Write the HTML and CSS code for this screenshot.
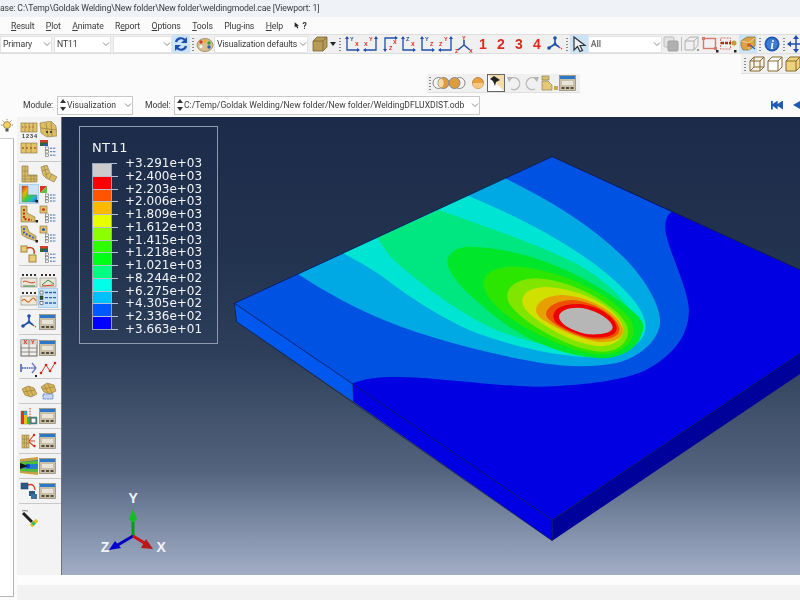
FILE: index.html
```html
<!DOCTYPE html>
<html lang="en">
<head>
<meta charset="utf-8">
<title>Abaqus/CAE Visualization</title>
<link rel="stylesheet" href="styles.css">
</head>
<body>
<svg class="defs" width="0" height="0" aria-hidden="true">
  <defs>
    <symbol id="chev" viewBox="0 0 8 8"><path d="M1 2.5 4 5.5 7 2.5" fill="none" stroke="#8a8a8a" stroke-width="1"/></symbol>
    <symbol id="spin" viewBox="0 0 8 16"><path d="M4 2 7 6H1Z M4 14 1 10H7Z" fill="#333"/></symbol>
    <symbol id="sync" viewBox="0 0 18 18"><path d="M4 7C5 3 10 2 13 5" fill="none" stroke="#1f4fb0" stroke-width="2.2"/><path d="M15 2V8H9Z" fill="#1f4fb0"/><path d="M14 11C13 15 8 16 5 13" fill="none" stroke="#1f4fb0" stroke-width="2.2"/><path d="M3 16V10H9Z" fill="#1f4fb0"/></symbol>
    <symbol id="palette" viewBox="0 0 18 18"><ellipse cx="9" cy="10" rx="8" ry="6.5" fill="#d8bf8e" stroke="#8a7550" stroke-width=".7"/><circle cx="5" cy="7" r="1.7" fill="#d63a2a"/><circle cx="9" cy="6" r="1.7" fill="#e8b020"/><circle cx="13" cy="8" r="1.7" fill="#3a9a3a"/><circle cx="13" cy="12" r="1.7" fill="#2a5ac0"/><circle cx="5" cy="11.5" r="1.5" fill="#fff"/></symbol>
    <symbol id="cube-solid" viewBox="0 0 18 18"><path d="M2 6 6 2H16V12L12 16H2Z" fill="#b89a58" stroke="#7a6436" stroke-width=".8"/><path d="M2 6H12V16M12 6 16 2" fill="none" stroke="#7a6436" stroke-width=".8"/></symbol>
    <symbol id="ax1" viewBox="0 0 18 18"><path d="M4 3V15H15" fill="none" stroke="#1f4fa8" stroke-width="1.3"/><path d="M4 1 6 4H2ZM17 15 14 17V13Z" fill="#1f4fa8"/><text x="7" y="6" class="axt blue">Y</text><text x="12" y="11" class="axt red">X</text></symbol>
    <symbol id="ax2" viewBox="0 0 18 18"><path d="M14 3V15H2" fill="none" stroke="#1f4fa8" stroke-width="1.3"/><path d="M14 1 16 4H12ZM1 15 4 13V17Z" fill="#1f4fa8"/><text x="7" y="6" class="axt red">Y</text><text x="2" y="11" class="axt red">X</text></symbol>
    <symbol id="ax3" viewBox="0 0 18 18"><path d="M15 3H4V15" fill="none" stroke="#1f4fa8" stroke-width="1.3"/><path d="M17 3 14 5V1ZM4 17 2 14H6Z" fill="#1f4fa8"/><text x="12" y="9" class="axt red">X</text><text x="8" y="15" class="axt red">Z</text></symbol>
    <symbol id="ax4" viewBox="0 0 18 18"><path d="M4 3V15H15" fill="none" stroke="#1f4fa8" stroke-width="1.3"/><path d="M4 1 6 4H2ZM17 15 14 17V13Z" fill="#1f4fa8"/><text x="7" y="6" class="axt blue">Z</text><text x="12" y="11" class="axt red">X</text></symbol>
    <symbol id="ax5" viewBox="0 0 18 18"><path d="M4 3V15H15" fill="none" stroke="#1f4fa8" stroke-width="1.3"/><path d="M4 1 6 4H2ZM17 15 14 17V13Z" fill="#1f4fa8"/><text x="7" y="6" class="axt blue">Y</text><text x="12" y="11" class="axt red">Z</text></symbol>
    <symbol id="ax6" viewBox="0 0 18 18"><path d="M14 3V15H2" fill="none" stroke="#1f4fa8" stroke-width="1.3"/><path d="M14 1 16 4H12ZM1 15 4 13V17Z" fill="#1f4fa8"/><text x="7" y="6" class="axt red">Y</text><text x="2" y="11" class="axt red">Z</text></symbol>
    <symbol id="tri" viewBox="0 0 18 18"><path d="M9 5V10L3 15M9 10 15 15" fill="none" stroke="#1f4fa8" stroke-width="1.5"/><text x="7" y="4.500" class="axt red">Y</text><text x="0" y="17.500" class="axt red">Z</text><text x="14" y="17.500" class="axt red">X</text></symbol>
    <symbol id="triad" viewBox="0 0 18 18"><path d="M9 3V9L3 13M9 9 13 12" fill="none" stroke="#1f4fa8" stroke-width="1.6"/><circle cx="9" cy="3" r="1.8" fill="#1f4fa8"/><circle cx="9" cy="9" r="1.5" fill="#1f4fa8"/><circle cx="3" cy="13" r="1.8" fill="#1f4fa8"/><path d="M13 12 16 14" stroke="#d63a2a" stroke-dasharray="1.5 1" stroke-width="1.5"/></symbol>
    <symbol id="pointer" viewBox="0 0 18 18"><path d="M4 2V15L7.500 11.500 10 16.500 12.500 15.500 10 10.500H15Z" fill="#eef1f5" stroke="#333" stroke-width="1.2"/></symbol>
    <symbol id="layers" viewBox="0 0 18 18"><rect x="2" y="2" width="10" height="10" rx="1" fill="#e3e3e3" stroke="#bbb"/><rect x="6" y="6" width="10" height="10" rx="1" fill="#b0b0b0" stroke="#a0a0a0"/></symbol>
    <symbol id="wire" viewBox="0 0 18 18"><path d="M2 6 7 2H15V10L11 15H2ZM2 6H11V15M11 6 15 2" fill="none" stroke="#a9a9a9" stroke-width=".9"/><circle cx="15" cy="15" r="1" fill="#777"/></symbol>
    <symbol id="redbox" viewBox="0 0 18 18"><rect x="2.500" y="3.500" width="12" height="10" fill="none" stroke="#d9786a" stroke-width="1.4"/><rect x="1" y="2" width="3" height="3" fill="#d9786a"/><rect x="13" y="12" width="3" height="3" fill="#d9786a"/><rect x="15" y="15" width="2.500" height="2.500" fill="#222"/></symbol>
    <symbol id="reddots" viewBox="0 0 18 18"><rect x="1.500" y="3" width="10" height="11" fill="none" stroke="#d9786a" stroke-dasharray="2 1"/><path d="M2 8H12" stroke="#b02818" stroke-width="2.500" stroke-dasharray="3 1"/><circle cx="15" cy="8" r="2.500" fill="#c09a40"/><rect x="15" y="15" width="2.500" height="2.500" fill="#222"/></symbol>
    <symbol id="boxsel" viewBox="0 0 18 18"><path d="M2 6 8 2H16L16 11 10 15H4L2 11Z" fill="#d8a444" stroke="#8a6a2a" stroke-width=".7"/><path d="M2 6 10 8 16 3M10 8V15" fill="none" stroke="#fff" stroke-width=".5"/><circle cx="10" cy="10" r="2" fill="#e05a1a"/><path d="M11 10 16 14" stroke="#2a5ac0" stroke-width="1.300"/></symbol>
    <symbol id="info" viewBox="0 0 18 18"><circle cx="9" cy="9" r="7.500" fill="#1f58b4"/><circle cx="9" cy="9" r="5.800" fill="#3c7ed0"/><text x="9" y="13.500" class="infot">i</text></symbol>
    <symbol id="move" viewBox="0 0 18 18"><path d="M9 1V17M1 9H17" stroke="#1f4fa8" stroke-width="1.500"/><path d="M9 0 12 4H6ZM9 18 6 14H12ZM0 9 4 6V12ZM18 9 14 12V6Z" fill="#1f4fa8"/></symbol>
    <symbol id="cube-w" viewBox="0 0 18 18"><path d="M2 6 6 2H16V12L12 16H2ZM2 6H12V16M12 6 16 2M6 2V12H16M6 12 2 16" fill="#fbf6ea" fill-opacity=".5" stroke="#8a6a30" stroke-width="1"/></symbol>
    <symbol id="cube-h" viewBox="0 0 18 18"><path d="M2 6 6 2H16V12L12 16H2Z" fill="#fff" stroke="#8a6a30" stroke-width="1"/><path d="M2 6H12V16M12 6 16 2" fill="none" stroke="#8a6a30" stroke-width="1"/></symbol>
    <symbol id="cube-y" viewBox="0 0 18 18"><path d="M2 6 6 2H16V12L12 16H2Z" fill="#efd37a" stroke="#8a6a30" stroke-width="1"/><path d="M2 6H12V16M12 6 16 2" fill="none" stroke="#8a6a30" stroke-width="1"/></symbol>
    <symbol id="venn1" viewBox="0 0 18 18"><circle cx="6.500" cy="9" r="5.500" fill="#f3f3f3" stroke="#888"/><circle cx="11.500" cy="9" r="5.500" fill="#e09c3c" stroke="#888"/><path d="M9 4.200A5.500 5.500 0 0 1 9 13.800A5.500 5.500 0 0 1 9 4.200" fill="#f7d9a8"/></symbol>
    <symbol id="venn2" viewBox="0 0 18 18"><circle cx="11.500" cy="9" r="5.500" fill="#f3f3f3" stroke="#888"/><circle cx="6.500" cy="9" r="5.500" fill="#e09c3c" stroke="#888"/></symbol>
    <symbol id="ball" viewBox="0 0 18 18"><circle cx="9" cy="9" r="5.500" fill="#e8a040" stroke="#a87020" stroke-width=".7"/><path d="M3.500 9H14.500A5.500 5.500 0 0 1 3.500 9" fill="#f4c880"/></symbol>
    <symbol id="brush" viewBox="0 0 18 18"><rect x=".5" y=".5" width="17" height="17" fill="#f4dca8" stroke="#666"/><path d="M1 1 17 17H1Z" fill="#fff"/><path d="M3 5 7 2 13 6 9 8 8 12 6 7Z" fill="#222"/></symbol>
    <symbol id="undo" viewBox="0 0 18 18"><path d="M5 5A6 6 0 1 1 6 15" fill="none" stroke="#b5b5b5" stroke-width="1.300"/><path d="M2 3 8 3 4 8Z" fill="#b5b5b5"/></symbol>
    <symbol id="redo" viewBox="0 0 18 18"><path d="M13 5A6 6 0 1 0 12 15" fill="none" stroke="#b5b5b5" stroke-width="1.300"/><path d="M16 3 10 3 14 8Z" fill="#b5b5b5"/></symbol>
    <symbol id="folder" viewBox="0 0 18 18"><rect x="1" y="2" width="7" height="4" fill="#d8c070" stroke="#8a7440" stroke-width=".6"/><path d="M1 7H7L11 11V16H1Z" fill="#e3c878" stroke="#8a7440" stroke-width=".6"/><rect x="13" y="12" width="4" height="4" fill="#c8a850"/></symbol>
    <symbol id="dlg" viewBox="0 0 18 18"><rect x=".5" y="1.500" width="16" height="15" fill="#c9bea6" stroke="#8b8270" stroke-width=".7"/><rect x="1" y="2" width="15" height="3" fill="#2c78c8"/><rect x="3" y="7" width="11" height="4" fill="#e8e4da"/><rect x="2.500" y="13" width="3" height="2" fill="#554d3e"/><rect x="7" y="13" width="3" height="2" fill="#554d3e"/><rect x="11.500" y="13" width="3" height="2" fill="#554d3e"/></symbol>
    <symbol id="grid-num" viewBox="0 0 18 18"><rect x="1" y="2" width="16" height="9" fill="#e2c466" stroke="#8a7440" stroke-width=".6"/><path d="M5 2V11M9 2V11M13 2V11" stroke="#8a7440" stroke-width=".6"/><path d="M2 6H16" stroke="#b05a30" stroke-width="1.200" stroke-dasharray="1.500 2"/><text x="2" y="17" class="axt dark">1</text><text x="6" y="17" class="axt dark">2</text><text x="10" y="17" class="axt dark">3</text><text x="14" y="17" class="axt dark">4</text></symbol>
    <symbol id="grid-tilt" viewBox="0 0 18 18"><path d="M1 2 12 0 17 5 18 15 8 16 2 12Z" fill="#dcbe62" stroke="#8a7440" stroke-width=".6"/><path d="M7 2 9 15M12 1 13 15M2 7 17 9" stroke="#8a7440" stroke-width=".6"/><path d="M7 11H15" stroke="#444" stroke-width="2" stroke-dasharray="2 2"/></symbol>
    <symbol id="grid-3" viewBox="0 0 18 18"><rect x="1" y="4" width="16" height="10" fill="#e2c466" stroke="#8a7440" stroke-width=".6"/><path d="M6 4V14M11 4V14" stroke="#8a7440" stroke-width=".6"/><path d="M2 9H16" stroke="#b05a30" stroke-width="1.400" stroke-dasharray="2 2"/></symbol>
    <symbol id="list" viewBox="0 0 18 18"><rect x="1" y="1" width="8" height="6" fill="#2a6a3a"/><rect x="1" y="1" width="8" height="2.500" fill="#d63a2a"/><rect x="5" y="5" width="3" height="2" fill="#2a5ac0"/><g fill="#fff" stroke="#666" stroke-width=".6"><rect x="6.500" y="8" width="3" height="2.500"/><rect x="6.500" y="11.500" width="3" height="2.500"/><rect x="6.500" y="15" width="3" height="2.500"/></g><path d="M11 9.200H17M11 12.700H17M11 16.200H17" stroke="#3a6ab8" stroke-dasharray="2 .8"/></symbol>
    <symbol id="list-r" viewBox="0 0 18 18"><path d="M1 1H8L1 8Z" fill="#e03020"/><path d="M8 1V8H1Z" fill="#60c040"/><g fill="#fff" stroke="#666" stroke-width=".6"><rect x="6.500" y="9" width="3" height="2.500"/><rect x="6.500" y="12" width="3" height="2.500"/><rect x="6.500" y="15" width="3" height="2.500"/></g><path d="M11 10H17M11 13H17M11 16H17" stroke="#3a6ab8" stroke-dasharray="2 .8"/></symbol>
    <symbol id="list-y" viewBox="0 0 18 18"><rect x="1" y="1" width="7" height="7" fill="#e2c466" stroke="#8a7440" stroke-width=".6"/><circle cx="4.500" cy="4.500" r="1.600" fill="#d63a2a"/><g fill="#fff" stroke="#666" stroke-width=".6"><rect x="6.500" y="9" width="3" height="2.500"/><rect x="6.500" y="12" width="3" height="2.500"/><rect x="6.500" y="15" width="3" height="2.500"/></g><path d="M11 10H17M11 13H17M11 16H17" stroke="#3a6ab8" stroke-dasharray="2 .8"/></symbol>
    <symbol id="list-b" viewBox="0 0 18 18"><rect x="1" y="1" width="7" height="7" fill="#e2c466" stroke="#8a7440" stroke-width=".6"/><circle cx="4.500" cy="4.500" r="1.600" fill="#2a5ac0"/><g fill="#fff" stroke="#666" stroke-width=".6"><rect x="6.500" y="9" width="3" height="2.500"/><rect x="6.500" y="12" width="3" height="2.500"/><rect x="6.500" y="15" width="3" height="2.500"/></g><path d="M11 10H17M11 13H17M11 16H17" stroke="#3a6ab8" stroke-dasharray="2 .8"/></symbol>
    <symbol id="l-plain" viewBox="0 0 18 18"><path d="M2 1H8V10H17V17H2Z" fill="#d9bd66" stroke="#857040" stroke-width=".6"/><path d="M5 1V17M2 6H8M2 11H17M2 14H17M11 10V17M14 10V17" stroke="#857040" stroke-width=".5"/></symbol>
    <symbol id="l-tilt" viewBox="0 0 18 18"><path d="M2 2 8 0 11 8 18 12 15 17 7 13 4 10Z" fill="#d9bd66" stroke="#857040" stroke-width=".6"/><path d="M5 1 8 12M3 6 9 4M6 10 10 8M10 14 13 9" stroke="#857040" stroke-width=".5"/></symbol>
    <symbol id="l-rainbow" viewBox="0 0 18 18"><defs><linearGradient id="rb" x1="0" y1="0" x2="1" y2="1"><stop offset="0" stop-color="#e02020"/><stop offset=".3" stop-color="#f0b000"/><stop offset=".55" stop-color="#30d040"/><stop offset=".8" stop-color="#20b0e0"/><stop offset="1" stop-color="#2040d0"/></linearGradient></defs><path d="M2 1H8V10H17V17H2Z" fill="url(#rb)" stroke="#777" stroke-width=".5"/><rect x="15.500" y="15" width="2.500" height="2.500" fill="#222"/></symbol>
    <symbol id="l-red" viewBox="0 0 18 18"><path d="M1 1H7V8L15 12V17H1Z" fill="#d9bd66" stroke="#857040" stroke-width=".6"/><path d="M4 4V14L12 15" stroke="#c03018" stroke-width="2" stroke-dasharray="2 1.500" fill="none"/><rect x="15.500" y="15" width="2.500" height="2.500" fill="#222"/></symbol>
    <symbol id="l-blue" viewBox="0 0 18 18"><path d="M1 1H7L9 7 16 11V16L7 13 2 10Z" fill="#d9bd66" stroke="#857040" stroke-width=".6"/><path d="M4 3V8L10 11 14 13" stroke="#3a60c0" stroke-width="2" stroke-dasharray="2 1.500" fill="none"/><rect x="15.500" y="15" width="2.500" height="2.500" fill="#222"/></symbol>
    <symbol id="squares-y" viewBox="0 0 18 18"><rect x="1" y="1" width="6" height="6" fill="#eccb74" stroke="#a08840"/><path d="M7 3C13 1 15 5 14 9" fill="none" stroke="#d04020" stroke-width="1.500"/><rect x="9" y="10" width="7" height="7" fill="#eccb74" stroke="#a08840"/></symbol>
    <symbol id="chart-a" viewBox="0 0 18 18"><path d="M2 4H16" stroke="#333" stroke-width="2" stroke-dasharray="2 2"/><rect x="1" y="7" width="16" height="9" fill="#e8e4d8" stroke="#888" stroke-width=".6"/><path d="M3 11C6 8 10 14 15 11" stroke="#d04020" fill="none"/><path d="M3 15H15" stroke="#3a8a3a"/></symbol>
    <symbol id="chart-b" viewBox="0 0 18 18"><path d="M2 4H16" stroke="#333" stroke-width="2" stroke-dasharray="2 2"/><rect x="1" y="7" width="16" height="9" fill="#e8e4d8" stroke="#888" stroke-width=".6"/><path d="M3 14 9 9 15 13" stroke="#3a8a3a" fill="none"/><path d="M3 15 15 14" stroke="#d04020"/></symbol>
    <symbol id="chart-c" viewBox="0 0 18 18"><path d="M2 4H16" stroke="#333" stroke-width="2" stroke-dasharray="2 2"/><rect x="1" y="7" width="16" height="9" fill="#efe8da" stroke="#888" stroke-width=".6"/><path d="M2 12C5 7 7 16 10 12S14 8 16 12" stroke="#d07030" fill="none" stroke-width="1.200"/></symbol>
    <symbol id="keylist" viewBox="0 0 18 18"><g fill="#fff" stroke="#555" stroke-width=".7"><rect x="1" y="2" width="3" height="3"/><rect x="1" y="12.500" width="3" height="3"/></g><rect x="1" y="7" width="3" height="3.500" fill="#2a5a30" stroke="#222" stroke-width=".5"/><path d="M6 3.500H17M6 8.700H17M6 14H17" stroke="#2a60c0" stroke-dasharray="3 1" stroke-width="1.300"/></symbol>
    <symbol id="table" viewBox="0 0 18 18"><rect x="1" y="1" width="16" height="16" fill="#f0ece6" stroke="#666"/><rect x="1" y="1" width="16" height="4.500" fill="#d8d0c8"/><path d="M9 1V17M1 9H17M1 13H17" stroke="#777" stroke-width=".8"/><text x="3.500" y="5" class="axt red">X</text><text x="11" y="5" class="axt red">Y</text></symbol>
    <symbol id="measure" viewBox="0 0 18 18"><path d="M1 5V13" stroke="#3a5ab0" stroke-width="1.500"/><path d="M2 9H15" stroke="#3a5ab0" stroke-width="1.300" stroke-dasharray="1.500 .8"/><path d="M12 4 16 9 12 14" fill="none" stroke="#6a7ac0" stroke-width="1.300"/><rect x="15" y="16" width="2" height="2" fill="#222"/></symbol>
    <symbol id="polyline" viewBox="0 0 18 18"><path d="M2 14 7 6 11 12 16 4" fill="none" stroke="#d04030" stroke-width="1"/><g fill="#d02818"><circle cx="2" cy="14" r="1.300"/><circle cx="7" cy="6" r="1.300"/><circle cx="11" cy="12" r="1.300"/><circle cx="16" cy="4" r="1.300"/></g></symbol>
    <symbol id="sheet" viewBox="0 0 18 18"><path d="M2 7 8 4 14 6 17 12 11 15 5 13Z" fill="#d6b456" stroke="#8a7440" stroke-width=".6"/><path d="M5 5 9 14M9 4 13 14M3 10 15 8" stroke="#8a7440" stroke-width=".5"/></symbol>
    <symbol id="sheet-b" viewBox="0 0 18 18"><path d="M2 5 8 1 15 3 17 9 11 12 5 10Z" fill="#d6b456" stroke="#8a7440" stroke-width=".6"/><path d="M5 3 9 11M9 2 13 11M3 7 15 5" stroke="#8a7440" stroke-width=".5"/><rect x="4" y="12" width="10" height="5" fill="#c8d8f0" stroke="#3a60b0" stroke-width=".7" stroke-dasharray="2 .7"/></symbol>
    <symbol id="cut" viewBox="0 0 18 18"><path d="M1 4H7V10H17V17H1Z" fill="#30b0c0" stroke="#555" stroke-width=".4"/><path d="M1 4H4V17H1Z" fill="#e03020"/><path d="M4 8H7V17H4Z" fill="#e8c020"/><path d="M7 11H10V17H7Z" fill="#30c050"/><rect x="11" y="11" width="5" height="5" fill="#fff" stroke="#555"/><path d="M10 1V18" stroke="#d04020" stroke-dasharray="1.500 1.200"/></symbol>
    <symbol id="fans" viewBox="0 0 18 18"><rect x="2" y="3" width="7" height="13" fill="#d9bd66" stroke="#857040" stroke-width=".5"/><path d="M4.300 3V16M6.600 3V16M2 7H9M2 11H9" stroke="#857040" stroke-width=".5"/><path d="M9 9 14 3M9 9 15 9M9 10 14 14" stroke="#d04020" stroke-width="1.100"/><g fill="#d02818"><circle cx="14" cy="3" r="1.200"/><circle cx="14.500" cy="14" r="1.200"/></g></symbol>
    <symbol id="strip" viewBox="0 0 18 18"><path d="M0 3 18 1V17L0 15Z" fill="#2080d0"/><path d="M0 5 18 4V7L8 7 0 9ZM0 11 8 12 18 12V15L0 14Z" fill="#50c030"/><path d="M0 2 18 0V3L0 5ZM0 14 18 15V18L0 16Z" fill="#c8a040"/><circle cx="8" cy="9" r="2.200" fill="#1040c0"/><path d="M0 6 8 9 0 12Z" fill="#111"/></symbol>
    <symbol id="squares-b" viewBox="0 0 18 18"><rect x="1" y="1" width="7" height="6" fill="#2a5a8a" stroke="#1a3a5a" stroke-width=".5"/><path d="M8 3C13 1 15 5 15 8" fill="none" stroke="#d04020" stroke-width="1.400"/><rect x="9" y="9" width="6" height="5" fill="#2a5a8a"/><rect x="11" y="12" width="6" height="5" fill="#3a72a0"/></symbol>
    <symbol id="wand" viewBox="0 0 18 18"><path d="M3 3 12 12" stroke="#222" stroke-width="3"/><path d="M2 1C4 0 6 1 8 1" stroke="#777" fill="none"/><path d="M11 16 17 10" stroke="#e0c020" stroke-width="3.500"/><path d="M12.500 14.500 14.500 12.500" stroke="#30c060" stroke-width="3.500"/></symbol>
    <symbol id="bulb" viewBox="0 0 14 14"><circle cx="7" cy="6" r="3.500" fill="#f0d060" stroke="#8a7030" stroke-width=".7"/><rect x="5.500" y="9.500" width="3" height="3" fill="#555"/><path d="M1 6H2.500M11.500 6H13M2.500 1.500 3.700 2.700M11.500 1.500 10.300 2.700M7 0V1.200" stroke="#8a7030" stroke-width=".8"/></symbol>
    <symbol id="whatsthis" viewBox="0 0 12 12"><path d="M1 1V9L3 7 5 10.500 6.500 9.800 5 6.500H7.500Z" fill="#222"/></symbol>
  </defs>
</svg>

<div class="title">ase: C:\Temp\Goldak Welding\New folder\New folder\weldingmodel.cae [Viewport: 1]</div>

<nav class="menu">
  <span class="mi"><u>R</u>esult</span>
  <span class="mi"><u>P</u>lot</span>
  <span class="mi"><u>A</u>nimate</span>
  <span class="mi">R<u>e</u>port</span>
  <span class="mi"><u>O</u>ptions</span>
  <span class="mi"><u>T</u>ools</span>
  <span class="mi">Plu<u>g</u>-ins</span>
  <span class="mi"><u>H</u>elp</span>
  <span class="mi help"><svg class="wt"><use href="#whatsthis"/></svg>?</span>
</nav>

<div class="toolbar">
  <div class="combo w52">Primary<svg class="ch"><use href="#chev"/></svg></div>
  <div class="combo w57">NT11<svg class="ch"><use href="#chev"/></svg></div>
  <div class="combo w59"><svg class="ch"><use href="#chev"/></svg></div>
  <span class="btn on nogap"><svg class="ic"><use href="#sync"/></svg></span>
  <i class="grip"></i>
  <span class="btn"><svg class="ic"><use href="#palette"/></svg></span>
  <div class="combo w94 nogap">Visualization defaults<svg class="ch"><use href="#chev"/></svg></div>
  <span class="btn ml3"><svg class="ic"><use href="#cube-solid"/></svg></span>
  <i class="drop"></i>
  <i class="grip"></i>
  <span class="btn ax"><svg class="ic"><use href="#ax1"/></svg></span>
  <span class="btn ax"><svg class="ic"><use href="#ax2"/></svg></span>
  <span class="btn ax"><svg class="ic"><use href="#ax3"/></svg></span>
  <span class="btn ax"><svg class="ic"><use href="#ax4"/></svg></span>
  <span class="btn ax"><svg class="ic"><use href="#ax5"/></svg></span>
  <span class="btn ax"><svg class="ic"><use href="#ax6"/></svg></span>
  <span class="btn ax"><svg class="ic"><use href="#tri"/></svg></span>
  <span class="btn digit">1</span>
  <span class="btn digit">2</span>
  <span class="btn digit">3</span>
  <span class="btn digit">4</span>
  <span class="btn"><svg class="ic"><use href="#triad"/></svg></span>
  <i class="grip"></i>
  <span class="btn on"><svg class="ic"><use href="#pointer"/></svg></span>
  <div class="combo w74 nogap grey">All<svg class="ch"><use href="#chev"/></svg></div>
  <span class="btn"><svg class="ic"><use href="#layers"/></svg></span>
  <i class="vsep"></i>
  <span class="btn"><svg class="ic"><use href="#wire"/></svg></span>
  <span class="btn"><svg class="ic"><use href="#redbox"/></svg></span>
  <span class="btn"><svg class="ic"><use href="#reddots"/></svg></span>
  <span class="btn on ml2"><svg class="ic"><use href="#boxsel"/></svg></span>
  <i class="grip"></i>
  <span class="btn"><svg class="ic"><use href="#info"/></svg></span>
  <i class="grip"></i>
  <span class="btn"><svg class="ic"><use href="#move"/></svg></span>
</div>

<div class="band">
  <div class="band-row right">
    <div class="strip"><i class="grip"></i>
      <span class="btn"><svg class="ic"><use href="#cube-w"/></svg></span>
      <span class="btn"><svg class="ic"><use href="#cube-h"/></svg></span>
      <span class="btn"><svg class="ic"><use href="#cube-y"/></svg></span>
    </div>
  </div>
  <div class="band-row">
    <div class="strip inset">
      <i class="grip"></i>
      <span class="btn sm"><svg class="ic"><use href="#venn1"/></svg></span>
      <span class="btn sm"><svg class="ic"><use href="#venn2"/></svg></span>
      <span class="btn ml4"><svg class="ic"><use href="#ball"/></svg></span>
      <span class="btn"><svg class="ic"><use href="#brush"/></svg></span>
      <span class="btn"><svg class="ic"><use href="#undo"/></svg></span>
      <span class="btn"><svg class="ic"><use href="#redo"/></svg></span>
      <span class="btn"><svg class="ic"><use href="#folder"/></svg></span>
      <span class="btn"><svg class="ic"><use href="#dlg"/></svg></span>
    </div>
  </div>
</div>

<div class="modulebar">
  <label class="lb lb-mod">Module:</label>
  <div class="combo spin w76"><svg class="sp"><use href="#spin"/></svg>Visualization<svg class="ch"><use href="#chev"/></svg></div>
  <label class="lb lb-model">Model:</label>
  <div class="combo spin w306"><svg class="sp"><use href="#spin"/></svg>C:/Temp/Goldak Welding/New folder/New folder/WeldingDFLUXDIST.odb<svg class="ch"><use href="#chev"/></svg></div>
  <div class="player"><span class="first"></span><span class="prev"></span></div>
</div>

<div class="workspace">
  <aside class="treecol">
    <div class="bulbbox"><svg class="bulb"><use href="#bulb"/></svg></div>
    <div class="tree"></div>
  </aside>
  <div class="rightcol">
    <div class="main">
      <div class="toolbox">
        <div class="tg g1">
          <div class="tr"><svg class="ic"><use href="#grid-num"/></svg><svg class="ic"><use href="#grid-tilt"/></svg></div>
          <div class="tr"><svg class="ic"><use href="#grid-3"/></svg><svg class="ic"><use href="#list"/></svg></div>
        </div>
        <div class="tg g2">
          <div class="tr"><svg class="ic"><use href="#l-plain"/></svg><svg class="ic"><use href="#l-tilt"/></svg></div>
          <div class="tr"><svg class="ic act"><use href="#l-rainbow"/></svg><svg class="ic"><use href="#list-r"/></svg></div>
          <div class="tr"><svg class="ic"><use href="#l-red"/></svg><svg class="ic"><use href="#list-y"/></svg></div>
          <div class="tr"><svg class="ic"><use href="#l-blue"/></svg><svg class="ic"><use href="#list-b"/></svg></div>
          <div class="tr"><svg class="ic"><use href="#squares-y"/></svg><svg class="ic"><use href="#list"/></svg></div>
        </div>
        <div class="tg g3">
          <div class="tr"><svg class="ic"><use href="#chart-a"/></svg><svg class="ic"><use href="#chart-b"/></svg></div>
          <div class="tr"><svg class="ic"><use href="#chart-c"/></svg><svg class="ic act"><use href="#keylist"/></svg></div>
        </div>
        <div class="tg g1r">
          <div class="tr"><svg class="ic"><use href="#triad"/></svg><svg class="ic"><use href="#dlg"/></svg></div>
        </div>
        <div class="tg g5">
          <div class="tr"><svg class="ic"><use href="#table"/></svg><svg class="ic"><use href="#dlg"/></svg></div>
          <div class="tr"><svg class="ic"><use href="#measure"/></svg><svg class="ic"><use href="#polyline"/></svg></div>
        </div>
        <div class="tg g1r">
          <div class="tr"><svg class="ic"><use href="#sheet"/></svg><svg class="ic"><use href="#sheet-b"/></svg></div>
        </div>
        <div class="tg g1r">
          <div class="tr"><svg class="ic"><use href="#cut"/></svg><svg class="ic"><use href="#dlg"/></svg></div>
        </div>
        <div class="tg g1r">
          <div class="tr"><svg class="ic"><use href="#fans"/></svg><svg class="ic"><use href="#dlg"/></svg></div>
        </div>
        <div class="tg g1r">
          <div class="tr"><svg class="ic"><use href="#strip"/></svg><svg class="ic"><use href="#dlg"/></svg></div>
        </div>
        <div class="tg g1r">
          <div class="tr"><svg class="ic"><use href="#squares-b"/></svg><svg class="ic"><use href="#dlg"/></svg></div>
        </div>
        <div class="tg last">
          <div class="tr"><svg class="ic"><use href="#wand"/></svg></div>
        </div>
      </div>

      <div class="viewport">
        <svg class="plot" viewBox="61 117 739 458" width="739" height="458">
          <g transform="translate(230 150) scale(.36364 .33333)">
            <path d="M12 460 886 20 1771 461 886 1110Z" fill="#0000e2"/>
            <path d="M12 460 18 515 340 755 338 700Z" fill="#0058ee"/>
            <path d="M338 700 340 755 886 1172 886 1110Z" fill="#0000e2"/>
            <path d="M886 1110 886 1172 1771 523 1771 461Z" fill="#00009a"/>
            <path d="M12 460 886 20 1215 186C1200 195 1195 215 1198 245C1205 300 1262 420 1262 480C1262 560 1215 620 1140 662C1070 695 960 706 850 710C740 708 620 690 520 683C440 678 380 680 338 700Z" fill="#0052e2"/>
            <path d="M188 373 757 85C880 150 1000 230 1090 330C1150 400 1183 470 1183 515C1180 570 1130 620 1060 640C980 655 900 650 800 628C650 595 500 550 380 490C300 450 240 410 188 373Z" fill="#00a8e4"/>
            <path d="M312 310 655 137C770 190 900 260 1000 340C1090 415 1143 480 1143 530C1140 585 1080 620 1000 622C900 620 780 590 680 550C570 500 480 430 420 380C380 350 345 330 312 310Z" fill="#00e4d4"/>
            <path d="M405 263 575 180C700 230 830 275 950 340C1050 400 1115 480 1115 530C1112 575 1055 603 990 603C900 600 800 570 720 535C620 480 520 400 440 320Z" fill="#00e680"/>
          </g>
          <g transform="translate(440 240) scale(.33333)">
            <path d="M22 60C30 30 60 20 90 20C250 25 400 90 520 170C580 210 612 240 610 260C605 320 550 355 480 355C350 345 230 290 130 200C70 150 20 100 22 60Z" fill="#00e62a"/>
            <path d="M130 125C140 90 180 78 230 80C340 85 500 150 570 235C590 265 585 320 520 340C470 350 400 335 320 295C220 250 130 185 130 125Z" fill="#2ae600"/>
            <path d="M202 165C205 130 250 115 290 115C370 118 500 170 555 245C580 285 550 335 490 335C420 335 330 290 270 250C230 220 200 195 202 165Z" fill="#80e600"/>
            <path d="M247 180C250 155 280 140 320 141C400 145 510 185 545 250C565 295 520 322 470 318C400 310 330 270 285 235C260 215 245 200 247 180Z" fill="#d0e000"/>
            <path d="M288 210C290 180 330 165 370 165C440 170 530 210 548 265C555 300 510 310 470 305C410 295 350 265 310 240C295 230 288 220 288 210Z" fill="#e8a000"/>
            <path d="M318 222C322 195 360 180 400 180C460 185 530 225 538 265C540 295 500 300 460 298C410 290 360 265 335 245C325 238 318 230 318 222Z" fill="#ec5000"/>
            <path d="M340 225C345 200 380 190 420 192C480 198 530 235 530 265C530 290 490 295 450 292C410 285 370 265 350 250C343 242 340 235 340 225Z" fill="#ee0000"/>
            <path d="M357 228C360 212 385 202 415 203C465 206 518 240 518 262C518 280 480 285 445 283C410 278 375 260 365 247C360 240 356 235 357 228Z" fill="#b6b6b6"/>
          </g>
          <g transform="translate(230 150) scale(.36364 .33333)" fill="none" stroke="#10183a" stroke-width="2">
            <path d="M12 460 886 20 1771 461" />
            <path d="M12 460 886 1110 1771 461M12 460 18 515 886 1172 886 1110"/>
            <path d="M338 700 340 755"/>
          </g>
        </svg>

        <div class="legend">
          <div class="lg-title">NT11</div>
          <div class="lg-body">
            <div class="lg-bar">
              <i class="c1"></i><i class="c2"></i><i class="c3"></i><i class="c4"></i><i class="c5"></i><i class="c6"></i><i class="c7"></i><i class="c8"></i><i class="c9"></i><i class="c10"></i><i class="c11"></i><i class="c12"></i><i class="c13"></i>
            </div>
            <div class="lg-labels">
              <span>+3.291e+03</span><span>+2.400e+03</span><span>+2.203e+03</span><span>+2.006e+03</span><span>+1.809e+03</span><span>+1.612e+03</span><span>+1.415e+03</span><span>+1.218e+03</span><span>+1.021e+03</span><span>+8.244e+02</span><span>+6.275e+02</span><span>+4.305e+02</span><span>+2.336e+02</span><span>+3.663e+01</span>
            </div>
          </div>
        </div>

        <svg class="triadview" viewBox="0 -6 70 76" width="70" height="76">
          <path d="M35 41 35 22" stroke="#0a9a1a" stroke-width="3"/>
          <path d="M35 14 39 24 36 27H34L31 24Z" fill="#10c020"/>
          <path d="M35 41 18 51" stroke="#0000c0" stroke-width="3"/>
          <path d="M11 55 17 46 23 53Z" fill="#0000d0"/>
          <path d="M35 41 48 49" stroke="#d01010" stroke-width="3"/>
          <path d="M55 54 43 53 48 44Z" fill="#b81818"/>
          <text x="35" y="8" class="tt">Y</text>
          <text x="7" y="57" class="tt">Z</text>
          <text x="63" y="57" class="tt">X</text>
        </svg>
      </div>
    </div>
    <div class="foot-a"></div>
    <div class="foot-b"></div>
  </div>
</div>
</body>
</html>
```

FILE: styles.css
```css
* { box-sizing: border-box; }
html, body { margin: 0; padding: 0; }
body {
  width: 800px;
  height: 600px;
  overflow: hidden;
  background: #fbfbfb;
  font-family: Roboto, "Noto Sans", sans-serif;
  font-size: 8.7px;
  letter-spacing: -.14px;
  color: #3a3a3a;
}
.defs { position: absolute; }
.axt { font: bold 5.5px "Liberation Sans", sans-serif; letter-spacing: 0; }
.axt.red { fill: #d8281c; }
.axt.blue { fill: #1f4fa8; }
.axt.dark { fill: #333; }
.infot { font: italic bold 12px "Liberation Serif", serif; fill: #fff; text-anchor: middle; }

.title {
  height: 17px;
  background: #eff3f8;
  line-height: 17px;
  white-space: nowrap;
  filter: blur(.3px);
}

.menu {
  height: 17px;
  display: flex;
  align-items: center;
  padding-left: 11px;
  background: #fbfbfb;
  filter: blur(.3px);
}
.mi { white-space: nowrap; margin-right: 11.5px; }
.help { display: flex; align-items: center; font-weight: 700; }
.wt { width: 8px; height: 9px; }

.toolbar {
  height: 20px;
  display: flex;
  align-items: center;
  background: #f0f0f0;
  border-top: 1px solid #dedede;
  border-bottom: 1px solid #dedede;
  overflow: hidden;
  filter: blur(.3px);
}
.combo {
  height: 17px;
  display: flex;
  align-items: center;
  flex: none;
  background: #fff;
  border: 1px solid #e4e4e4;
  padding-left: 2px;
  margin-right: 2px;
  white-space: nowrap;
  position: relative;
  overflow: hidden;
}
.combo.nogap { margin-right: 0; }
.combo.grey { color: #777; font-weight: 700; }
.w52 { width: 52px; }
.w57 { width: 57px; }
.w59 { width: 59px; margin-right: 0; }
.w94 { width: 94px; }
.w74 { width: 74px; }
.w76 { width: 76px; height: 19px; }
.w306 { width: 306px; height: 19px; }
.ch {
  width: 8px;
  height: 8px;
  position: absolute;
  right: 0;
  top: 50%;
  margin-top: -4px;
  background: #fff;
}
.spin { padding-left: 0; border-color: #c8c8c8; letter-spacing: 0; font-size: 8.6px; }
.sp { width: 8px; height: 16px; margin: 0 0 0 1px; flex: none; }

.btn {
  width: 18px;
  height: 18px;
  flex: none;
  display: flex;
  align-items: center;
  justify-content: center;
}
.btn.on { background: #cce4f7; }
.btn.sm { width: 16px; }
.btn.ax { width: 18.7px; }
.ml3 { margin-left: 3px; }
.ml2 { margin-left: 2px; }
.ml4 { margin-left: 4px; }
.ic { width: 18px; height: 18px; display: block; flex: none; }
.digit {
  font: bold 14px "Liberation Sans", sans-serif;
  letter-spacing: 0;
  color: #dc2a1e;
}
.grip {
  width: 6px;
  height: 14px;
  flex: none;
  background: radial-gradient(circle at 50% 50%, #8a8a8a 0 .7px, transparent 1px) 0 0 / 6px 3px;
}
.drop {
  width: 8px;
  height: 4px;
  flex: none;
  position: relative;
}
.drop::after {
  content: "";
  position: absolute;
  left: 1px;
  top: 0;
  border: 3px solid transparent;
  border-top: 4px solid #222;
  border-bottom: 0;
}
.vsep { width: 1px; height: 14px; background: #bdbdbd; flex: none; margin: 0 1px; }

.band { height: 39px; background: #fbfbfb; display: flex; flex-direction: column; }
.band-row { height: 19.5px; display: flex; }
.band-row.right { justify-content: flex-end; }
.strip {
  display: flex;
  align-items: center;
  height: 19.5px;
  background: #f0f0f0;
  box-shadow: inset 0 -1px 0 #e0e0e0;
  overflow: hidden;
  filter: blur(.3px);
}
.band-row.right .strip { width: 59px; padding-left: 1px; }
.strip.inset { margin-left: 427px; width: 153px; }

.modulebar {
  height: 24px;
  display: flex;
  align-items: center;
  background: #fbfbfb;
  filter: blur(.3px);
  position: relative;
}
.lb-mod { margin-left: 23px; width: 34px; }
.lb-model { margin-left: 10px; width: 29px; }
.player { margin-left: auto; display: flex; align-items: center; width: 29px; gap: 10px; }
.first { width: 12px; height: 9px; flex: none; background: #1f5ab0; clip-path: polygon(0 0, 15% 0, 15% 40%, 55% 0, 55% 40%, 100% 0, 100% 100%, 55% 60%, 55% 100%, 15% 60%, 15% 100%, 0 100%); }
.prev { width: 8px; height: 9px; flex: none; background: #1f5ab0; clip-path: polygon(100% 0, 100% 100%, 0 50%); }

.workspace { display: flex; height: 483px; }
.treecol { width: 14px; flex: none; display: flex; flex-direction: column; height: 480px; }
.bulbbox { height: 21px; padding: 2px 0 0 0; overflow: hidden; }
.bulb { width: 14px; height: 14px; display: block; }
.tree { flex: 1; background: #fff; border-right: 1px solid #b4b4b4; border-top: 1px solid #cfcfcf; border-bottom: 1px solid #b4b4b4; }
.rightcol { flex: 1; margin-left: 3px; display: flex; flex-direction: column; min-width: 0; }
.main { height: 458px; display: flex; }
.foot-a { height: 10px; background: #fdfdfd; }
.foot-b { flex: 1; background: #f2f2f2; }

.toolbox {
  width: 44px;
  flex: none;
  background: #f3f3f3;
  display: flex;
  flex-direction: column;
  filter: blur(.3px);
}
.tg {
  display: flex;
  flex-direction: column;
  justify-content: center;
  border-bottom: 1px solid #c8c8c8;
  margin-left: 2px;
  flex: none;
}
.tr { display: flex; justify-content: space-between; padding: 0 4px 0 1px; gap: 1px; height: 18px; align-items: center; }
.g1 { height: 45px; }
.g2 { height: 104px; }
.g2 .tr { height: 20px; }
.g3 { height: 44px; padding-top: 3px; }
.g1r { height: 25px; }
.g5 { height: 44px; padding-top: 3px; }
.g5 .tr { height: 20px; }
.last { border-bottom: 0; height: 30px; }
.act { background: #cce4f7; outline: 1px solid #a8d0ef; }

.viewport {
  flex: 1;
  position: relative;
  overflow: hidden;
  background: linear-gradient(180deg, #1b2b49 0%, #22334f 30%, #2d3f5a 52%, #53637d 77%, #7d8ba5 89%, #a2aec6 100%);
  border-left: 1px solid #6d7480;
}
.plot { display: block; position: absolute; left: -1px; top: 0; }

.legend {
  position: absolute;
  left: 17px;
  top: 9px;
  width: 139px;
  height: 218px;
  border: 1.5px solid #8e9ab0;
  padding: 13px 0 0 12px;
  color: #f2f4f8;
  font-family: "DejaVu Sans", sans-serif;
  font-size: 12px;
  letter-spacing: 0;
  filter: blur(.25px);
}
.lg-title { font-size: 13px; line-height: 16px; letter-spacing: .4px; }
.lg-body { display: flex; margin-top: 1px; position: relative; }
.lg-bar {
  width: 20px;
  margin-top: 6px;
  display: flex;
  flex-direction: column;
  border: 1px solid #9ba6ba;
  height: 167px;
  flex: none;
}
.lg-bar i { flex: 1; border-bottom: 1px solid #b8c0ce; position: relative; }
.lg-bar i:last-child { border-bottom: 0; }
.lg-bar i::after { content: ""; position: absolute; left: 18px; bottom: -1px; width: 7px; height: 1px; background: #b8c0ce; }
.lg-bar::before { content: ""; position: absolute; left: 18px; top: 6px; width: 7px; height: 1px; background: #b8c0ce; }
.c1 { background: #cccccc; }
.c2 { background: #ff0000; }
.c3 { background: #ff5500; }
.c4 { background: #ffb800; }
.c5 { background: #e8ff00; }
.c6 { background: #8cff00; }
.c7 { background: #2eff00; }
.c8 { background: #00ff18; }
.c9 { background: #00ff80; }
.c10 { background: #00ffe8; }
.c11 { background: #00bfff; }
.c12 { background: #0058ff; }
.c13 { background: #0000ff; }
.lg-labels { margin-left: 13px; display: flex; flex-direction: column; }
.lg-labels span { height: 12.77px; line-height: 12.77px; white-space: nowrap; }

.triadview { position: absolute; left: 36px; top: 372px; }
.tt { font: bold 14px "Liberation Sans", sans-serif; fill: #f0f3f8; text-anchor: middle; }
```
